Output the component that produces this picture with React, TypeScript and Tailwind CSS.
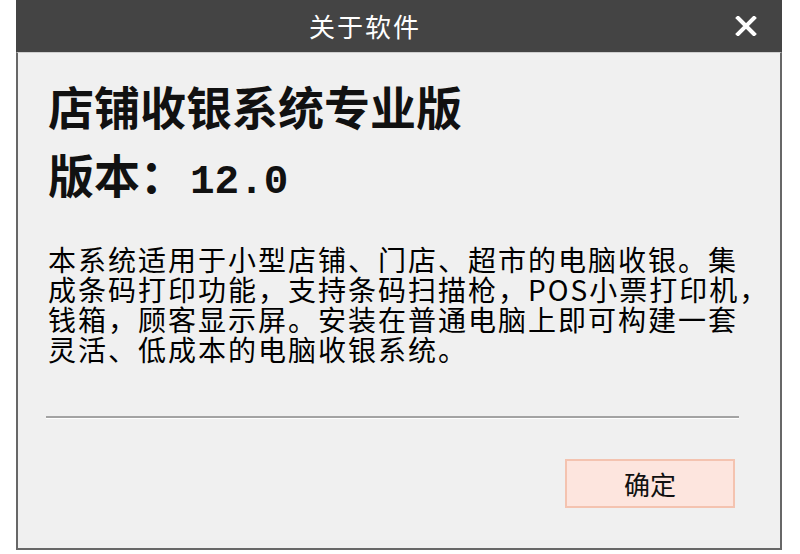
import React from "react";

const cjk = { fontFamily: '"Noto Sans CJK SC", "Noto Sans", sans-serif' };

const CloseIcon: React.FC = () => (
  <svg width="22" height="20" viewBox="0 0 22 20">
    <path d="M3 2 L19 18 M19 2 L3 18" stroke="#ffffff" strokeWidth="4" strokeLinecap="square" />
  </svg>
);

const bodyLines = [
  "本系统适用于小型店铺、门店、超市的电脑收银。集",
  "成条码打印功能，支持条码扫描枪，POS小票打印机，",
  "钱箱，顾客显示屏。安装在普通电脑上即可构建一套",
  "灵活、低成本的电脑收银系统。",
];

export default function App() {
  return (
    <div className="w-[800px] h-[554px] bg-white pl-[16px]" style={cjk}>
      <div className="w-[766px] h-[550px] flex flex-col">
        <div className="h-[52px] bg-[#444444] flex items-center shrink-0">
          <div className="flex-1 text-center text-white text-[26px] leading-none tracking-[2px]">
            关于软件
          </div>
          <div className="w-[68px] flex justify-center pr-[4px]">
            <CloseIcon />
          </div>
        </div>
        <div className="flex-1 flex flex-col bg-[#f0f0f0] border-2 border-t border-[#676767] border-t-[#cfcfcf] pl-[30px] pr-[41px] pt-[18px]">
          <div className="text-[46px] leading-[68px] font-bold text-[#111] whitespace-nowrap">
            店铺收银系统专业版
          </div>
          <div className="text-[46px] leading-[68px] font-bold text-[#111] whitespace-nowrap flex items-baseline">
            <span>版本：</span>
            <span
              className="text-[41px] ml-[4px]"
              style={{ fontFamily: '"Liberation Mono", monospace' }}
            >
              12.0
            </span>
          </div>
          <div className="mt-[28px] text-[28px] leading-[30px] tracking-[2px] text-black">
            {bodyLines.map((l, i) => (
              <div key={i} className="whitespace-nowrap">
                {l}
              </div>
            ))}
          </div>
          <div className="mt-[52px] -ml-[2px] h-0 border-t-2 border-[#a3a3a3] border-b border-b-white" />
          <div className="mt-[40px] flex justify-end pr-[4px]">
            <button className="w-[170px] h-[49px] bg-[#fde5de] border-2 border-[#f4c3b0] text-[26px] leading-none text-[#111] flex items-center justify-center">
              确定
            </button>
          </div>
        </div>
      </div>
    </div>
  );
}
